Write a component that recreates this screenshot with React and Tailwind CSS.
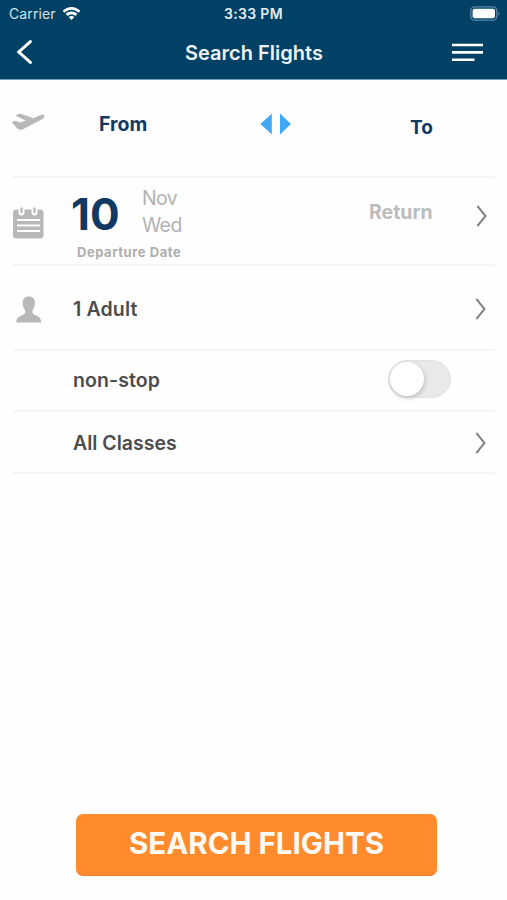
import React, { useState } from "react";

const Chevron = () => (
  <svg className="w-[12px] h-[24px]" viewBox="0 0 12 24" fill="none" stroke="#858585" strokeWidth="2">
    <path d="M1.4 2 L9.5 12 L1.4 22" />
  </svg>
);

const StatusBar = () => (
  <div className="grid grid-cols-3 h-[27px] items-center text-[14px] leading-none">
    <div className="flex items-center gap-[6px] pl-[9px] text-[#d6e1ea]">
      <span className="pt-px tracking-[0.1px]">Carrier</span>
      <svg className="w-[19px] h-[15px]" viewBox="0 0 19 15" fill="#fff">
        <path d="M.6 4.8 C5.8-.3 13.2-.3 18.4 4.8 L16.5 6.7 C12.2 2.7 6.8 2.7 2.5 6.7 Z" />
        <path d="M3.7 8 C7.2 4.8 11.8 4.8 15.3 8 L13.3 10 C11.1 8 7.9 8 5.7 10 Z" />
        <path d="M6.7 11 C8.4 9.5 10.6 9.5 12.3 11 L9.5 13.9 Z" />
      </svg>
    </div>
    <span className="pt-px text-center font-semibold text-[#e4ecf2] tracking-[0.3px]">3:33 PM</span>
    <div className="flex justify-end pr-[6px]">
      <svg className="w-[31px] h-[15px]" viewBox="0 0 31 15">
        <rect x=".8" y=".8" width="26" height="13.4" rx="3.8" fill="none" stroke="#5d87a5" strokeWidth="1.3" />
        <rect x="2.6" y="2.8" width="22.4" height="9.4" rx="2" fill="#fff" />
        <path d="M28.4 5.2 Q30.6 7.5 28.4 9.8 Z" fill="#5d87a5" />
      </svg>
    </div>
  </div>
);

const Header = () => (
  <header className="h-[80px] bg-[#004165] border-b border-[#79a3bd] text-white">
    <StatusBar />
    <div className="grid grid-cols-[80px_1fr_80px] h-[50px] items-center">
      <button className="pl-[16px]">
        <svg className="w-[18px] h-[26px]" viewBox="0 0 18 26" fill="none" stroke="#fff" strokeWidth="3">
          <path d="M14.4 2.6 L2.8 13 L14.4 23.4" strokeLinecap="round" />
        </svg>
      </button>
      <h1 className="pl-px pt-px text-center text-[20px] font-semibold leading-none text-[#edf3f7]">Search Flights</h1>
      <button className="pl-[25px]">
        <svg className="w-[31px] h-[19px]" viewBox="0 0 31 19" stroke="#fff" strokeWidth="2.6">
          <path d="M0 2 H31 M0 9.4 H31 M0 16.8 H22.5" />
        </svg>
      </button>
    </div>
  </header>
);

const PlaneIcon = () => (
  <svg className="w-[34px] h-[20px]" viewBox="0 0 34 20" fill="#b8b8b8">
    <path d="M0 9.9 L3 8.7 L8.2 10.6 L13.6 8.6 L3.4 3.4 L7.9 1.4 L21.8 6.2 L27.8 3.2 Q32 1.5 32.5 3.7 Q32.5 6.1 28.7 8.1 L11 17.2 Q8.3 18.6 5.4 16.8 L2 12.8 Z" />
  </svg>
);

const CalendarIcon = () => (
  <svg className="w-[31px] h-[32px]" viewBox="0 0 31 32">
    <rect x="0" y="2.5" width="30.5" height="29" rx="3.5" fill="#b8b8b8" />
    <path d="M8.5 0 V5.5 M21.5 0 V5.5" stroke="#fff" strokeWidth="6" strokeLinecap="round" />
    <path d="M8.5 1.5 V5 M21.5 1.5 V5" stroke="#b8b8b8" strokeWidth="2.4" strokeLinecap="round" />
    <path d="M4 13 H27 M4 18.5 H27 M4 24 H27" stroke="#fff" strokeWidth="2.2" />
  </svg>
);

const PersonIcon = () => (
  <svg className="w-[26px] h-[27px]" viewBox="0 0 26 27" fill="#b8b8b8">
    <path d="M12.8 .5 C16.7.5 19 2.8 18.9 6.8 C18.9 10.5 17.9 12.4 16.5 14.3 C16 17.3 17 18.1 19.7 19.3 C23.6 21.2 25.1 22.3 25.1 26.4 H.3 C.3 22.3 2.1 21.2 5.9 19.3 C8.6 18.1 9.6 17.3 9.1 14.3 C7.7 12.4 6.7 10.5 6.7 6.8 C6.6 2.8 8.9.5 12.8 .5 Z" />
  </svg>
);

const App = () => {
  const [nonStop, setNonStop] = useState(false);

  return (
    <div className="flex flex-col w-[507px] h-[900px] bg-[#fefefe] font-['Inter',sans-serif] whitespace-nowrap">
      <Header />

      <main className="pl-[13px] pr-[12px] text-[19.5px] font-semibold leading-none text-[#4c4c4c]">
        {/* Route */}
        <section className="flex items-start h-[98px] border-b-2 border-[#f4f4f4] text-[#123963] text-[19px] font-bold">
          <div className="w-[87px] pt-[32px] -ml-px">
            <PlaneIcon />
          </div>
          <span className="w-[161px] pt-[35px] text-[19.5px]">From</span>
          <button className="w-[150px] pt-[33px]">
            <svg className="w-[31px] h-[22px]" viewBox="0 0 31 22" fill="#42a8f5">
              <path d="M11.8 .5 V21.5 L.5 11 Z M20 .5 V21.5 L31 11 Z" />
            </svg>
          </button>
          <span className="pt-[38px]">To</span>
        </section>

        {/* Dates */}
        <section className="flex items-start h-[88px] border-b-2 border-[#f4f4f4]">
          <div className="w-[58px] pt-[29px]">
            <CalendarIcon />
          </div>
          <div className="w-[298px]">
            <div className="flex h-[66px]">
              <span className="w-[71px] pt-[14px] text-[44px] font-bold text-[#123963]">10</span>
              <div className="flex flex-col gap-[7px] pt-[11px] text-[19.5px] font-normal tracking-[-0.6px] text-[#b2b2b2]">
                <span>Nov</span>
                <span>Wed</span>
              </div>
            </div>
            <div className="pl-[6px] pt-[2px] text-[13px] font-bold tracking-[0.55px] text-[#aeaeae]">Departure Date</div>
          </div>
          <span className="flex-1 pt-[25px] font-bold text-[#bcbcbc]">Return</span>
          <div className="pt-[26px] pr-[7px]">
            <Chevron />
          </div>
        </section>

        {/* Passengers */}
        <section className="flex items-center h-[85px] border-b-2 border-[#f4f4f4]">
          <div className="w-[60px] pl-[3px] pt-[4px]">
            <PersonIcon />
          </div>
          <span className="flex-1 pt-[4px] tracking-[0.15px]">1 Adult</span>
          <div className="pr-[8px] pt-[3px]">
            <Chevron />
          </div>
        </section>

        <section className="flex items-center justify-between h-[61px] border-b-2 border-[#f4f4f4] pl-[60px] pr-[44px]">
          <span className="tracking-[0.1px]">non-stop</span>
          <button
            onClick={() => setNonStop(!nonStop)}
            className={`flex items-center w-[63px] h-[38px] p-[1px] mb-[3px] rounded-full border border-[#e2e2e4] ${
              nonStop ? "justify-end bg-green-500" : "bg-[#e9e9eb]"
            }`}
          >
            <span className="w-[34px] h-[34px] rounded-full bg-white shadow-[1px_2px_5px_rgba(0,0,0,0.18)]" />
          </button>
        </section>

        <section className="flex items-center justify-between h-[62px] border-b-2 border-[#f4f4f4] pl-[60px] pr-[8px] pt-[2px]">
          <span className="pt-[2px]">All Classes</span>
          <Chevron />
        </section>
      </main>

      <footer className="mt-auto pl-[76px] pb-[24px]">
        <button className="flex items-center justify-center w-[361px] h-[62px] pb-[1px] rounded-[7px] bg-[#ff8b2d] border-b border-[#e57f2c] text-[29.5px] font-bold leading-none text-[#fffaf4]">
          SEARCH FLIGHTS
        </button>
      </footer>
    </div>
  );
};

export default App;
